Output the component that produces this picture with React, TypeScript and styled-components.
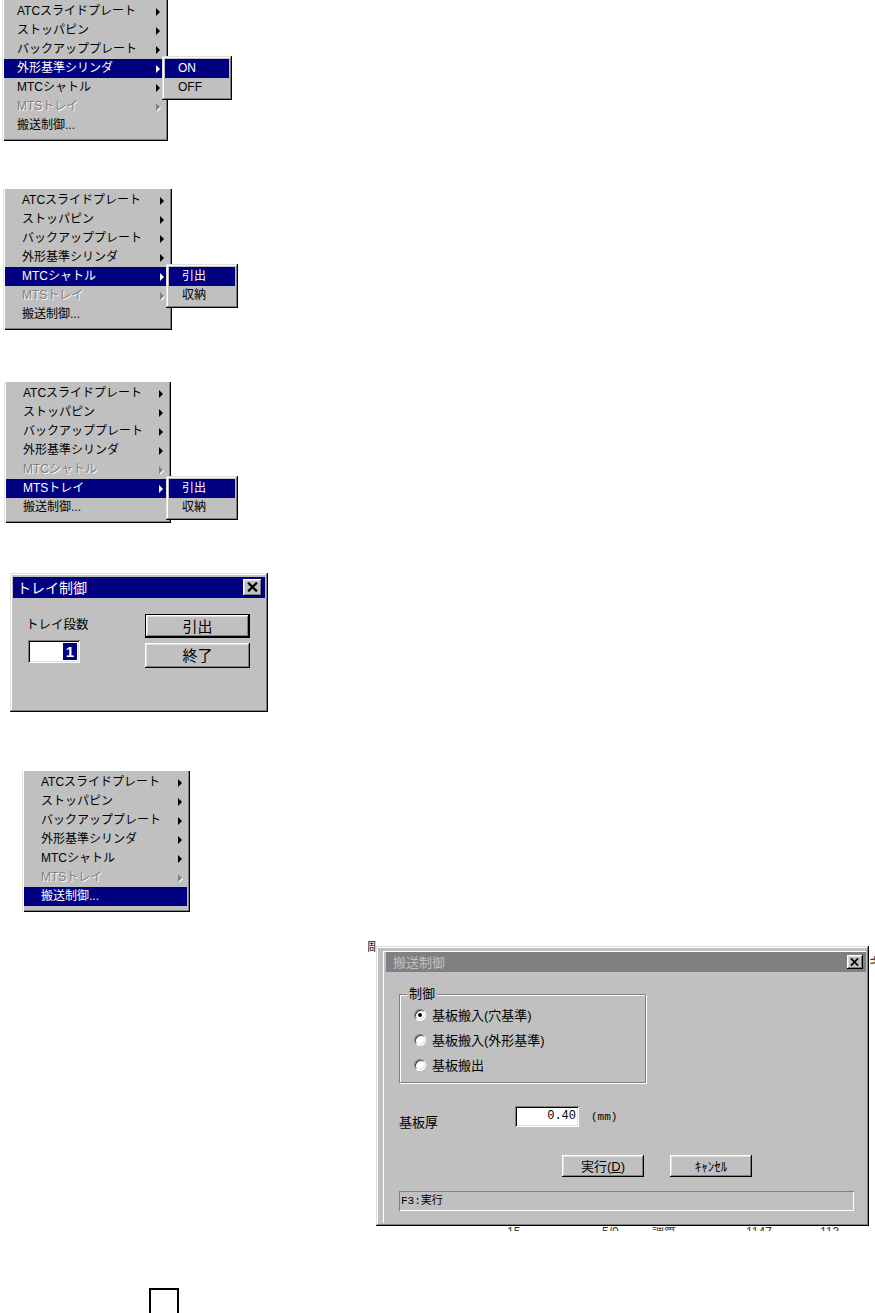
import React from "react";
import styled, { createGlobalStyle, css } from "styled-components";

const GlobalStyle = createGlobalStyle`
  html, body {
    margin: 0;
    padding: 0;
    background: #fff;
  }
  body {
    font-family: "Liberation Sans", "Noto Sans CJK JP", sans-serif;
    color: #000;
  }
`;

const raised = css`
  box-shadow: inset -1px -1px #000, inset 1px 1px #fff, inset -2px -2px #808080,
    inset 2px 2px #dfdfdf;
`;

const windowFrame = css`
  box-shadow: inset -1px -1px #000, inset 1px 1px #dfdfdf, inset -2px -2px #808080,
    inset 2px 2px #fff;
`;

const sunken = css`
  box-shadow: inset 1px 1px #808080, inset -1px -1px #fff, inset 2px 2px #000,
    inset -2px -2px #dfdfdf;
`;

const mono = `"Liberation Mono", "Noto Sans CJK JP", monospace`;

const Page = styled.div`
  width: 875px;
  height: 1313px;
  overflow: hidden;
  display: flex;
  flex-direction: column;
  align-items: flex-start;
`;

const Block = styled.div<{ $top: number; $left: number }>`
  position: relative;
  flex-shrink: 0;
  margin-top: ${(p) => p.$top}px;
  margin-left: ${(p) => p.$left}px;
`;

/* ---------- menus ---------- */

const Menu = styled.div<{ $width: number }>`
  width: ${(p) => p.$width}px;
  box-sizing: border-box;
  background: #c0c0c0;
  padding: 2px 3px 6px 2px;
  box-shadow: inset 1px 0 #dfdfdf, inset 2px 0 #fff, inset -1px -1px #000,
    inset -2px -2px #808080;
  font-size: 12px;
`;

const SubMenu = styled.div<{ $x: number; $y: number; $width: number }>`
  position: absolute;
  left: ${(p) => p.$x}px;
  top: ${(p) => p.$y}px;
  width: ${(p) => p.$width}px;
  box-sizing: border-box;
  background: #c0c0c0;
  padding: 3px;
  ${windowFrame};
  font-size: 12px;
`;

const Item = styled.div<{ $active?: boolean; $disabled?: boolean; $indent: number }>`
  height: 19px;
  display: flex;
  align-items: center;
  justify-content: space-between;
  padding: 0 5px 0 ${(p) => p.$indent}px;
  line-height: 19px;
  white-space: nowrap;
  background: ${(p) => (p.$active ? "#000080" : "transparent")};
  color: ${(p) => (p.$active ? "#fff" : p.$disabled ? "#808080" : "#000")};
  text-shadow: ${(p) => (p.$disabled && !p.$active ? "1px 1px 0 #fff" : "none")};
`;

const Arrow = styled.span<{ $disabled?: boolean }>`
  width: 0;
  height: 0;
  border-top: 4px solid transparent;
  border-bottom: 4px solid transparent;
  border-left: 4px solid currentColor;
  filter: ${(p) => (p.$disabled ? "drop-shadow(1px 1px 0 #fff)" : "none")};
`;

/* ---------- windows ---------- */

const Window = styled.div<{ $width: number; $height: number; $pad: string }>`
  width: ${(p) => p.$width}px;
  height: ${(p) => p.$height}px;
  box-sizing: border-box;
  flex-shrink: 0;
  background: #c0c0c0;
  padding: ${(p) => p.$pad};
  ${windowFrame};
  display: flex;
  flex-direction: column;
`;

const InnerFrame = styled.div`
  flex: 1;
  display: flex;
  flex-direction: column;
  border-top: 1px solid #fff;
  border-left: 1px solid #fff;
  padding-left: 2px;
`;

const TitleBar = styled.div<{ $inactive?: boolean; $height: number; $indent: number }>`
  height: ${(p) => p.$height}px;
  display: flex;
  align-items: center;
  justify-content: space-between;
  padding: 0 3px 0 ${(p) => p.$indent}px;
  background: ${(p) => (p.$inactive ? "#808080" : "#000080")};
  color: ${(p) => (p.$inactive ? "#c0c0c0" : "#fff")};
`;

const TitleText = styled.span<{ $size: number }>`
  font-size: ${(p) => p.$size}px;
  line-height: 1;
  white-space: nowrap;
`;

const CloseButton = styled.div<{ $w: number; $h: number }>`
  width: ${(p) => p.$w}px;
  height: ${(p) => p.$h}px;
  box-sizing: border-box;
  background: #c0c0c0;
  ${raised};
  display: flex;
  align-items: center;
  justify-content: center;
  padding: 0 1px 1px 0;
`;

const PushButton = styled.div<{ $w: number; $h: number; $size: number; $default?: boolean }>`
  width: ${(p) => p.$w}px;
  height: ${(p) => p.$h}px;
  box-sizing: border-box;
  background: #c0c0c0;
  border: ${(p) => (p.$default ? "1px solid #000" : "none")};
  ${raised};
  display: flex;
  align-items: center;
  justify-content: center;
  font-size: ${(p) => p.$size}px;
  line-height: 1;
  white-space: nowrap;
`;

/* ---------- トレイ制御 dialog ---------- */

const TrayBody = styled.div`
  display: flex;
  padding: 16px 0 0 13px;
`;

const TrayLeft = styled.div`
  width: 119px;
  display: flex;
  flex-direction: column;
  align-items: flex-start;
  padding-top: 3px;
`;

const TrayLabel = styled.div`
  font-size: 12.5px;
  line-height: 16px;
`;

const TrayField = styled.div`
  width: 52px;
  height: 23px;
  box-sizing: border-box;
  margin: 7px 0 0 2px;
  background: #fff;
  ${sunken};
  display: flex;
  align-items: center;
  justify-content: flex-end;
  padding-right: 3px;
`;

const Selected = styled.span`
  background: #000080;
  color: #fff;
  font-size: 15px;
  font-weight: bold;
  line-height: 17px;
  padding: 0 3px;
`;

const TrayButtons = styled.div`
  display: flex;
  flex-direction: column;
  gap: 5px;
`;

/* ---------- 搬送制御 dialog ---------- */

const DialogRow = styled.div`
  display: flex;
  align-items: flex-start;
  margin: 28px 0 0 368px;
  flex-shrink: 0;
`;

const Peek = styled.div<{ $w: number; $h: number; $top: number; $end?: boolean }>`
  width: ${(p) => p.$w}px;
  height: ${(p) => p.$h}px;
  margin-top: ${(p) => p.$top}px;
  overflow: hidden;
  display: flex;
  justify-content: ${(p) => (p.$end ? "flex-end" : "flex-start")};
  font-size: 13px;
  line-height: 13px;
  color: #222;
  flex-shrink: 0;
`;

const DialogShift = styled.div`
  margin-top: 6px;
`;

const TransferBody = styled.div`
  display: flex;
  flex-direction: column;
  align-items: flex-start;
  padding-left: 13px;
  font-size: 13px;
`;

const Group = styled.div`
  position: relative;
  width: 247px;
  height: 89px;
  box-sizing: border-box;
  margin-top: 22px;
  border: 1px solid #808080;
  box-shadow: inset 1px 1px #fff, 1px 1px #fff;
  padding: 7px 0 0 14px;
`;

const GroupLabel = styled.span`
  position: absolute;
  top: -9px;
  left: 7px;
  padding: 0 2px;
  background: #c0c0c0;
  line-height: 16px;
`;

const RadioRow = styled.div`
  height: 25px;
  display: flex;
  align-items: center;
  gap: 6px;
  white-space: nowrap;
`;

const RadioDot = styled.span<{ $checked?: boolean }>`
  position: relative;
  width: 12px;
  height: 12px;
  box-sizing: border-box;
  border-radius: 50%;
  border: 1px solid;
  border-color: #808080 #fff #fff #808080;
  background: #fff;
  box-shadow: inset 1px 1px #404040, inset -1px -1px #dfdfdf;
  &::after {
    content: "";
    display: ${(p) => (p.$checked ? "block" : "none")};
    position: absolute;
    left: 3px;
    top: 3px;
    width: 4px;
    height: 4px;
    border-radius: 50%;
    background: #000;
  }
`;

const ThickRow = styled.div`
  display: flex;
  align-items: center;
  margin-top: 23px;
  height: 21px;
`;

const ThickLabel = styled.span`
  width: 116px;
  padding-top: 9px;
`;

const NumField = styled.div`
  width: 64px;
  height: 21px;
  box-sizing: border-box;
  background: #fff;
  ${sunken};
  font-family: ${mono};
  font-size: 12px;
  line-height: 20px;
  text-align: right;
  padding-right: 3px;
`;

const Unit = styled.span`
  margin-left: 12px;
  font-family: ${mono};
  font-size: 11px;
`;

const ActionRow = styled.div`
  display: flex;
  gap: 26px;
  margin: 28px 0 0 163px;
`;

const StatusBar = styled.div`
  width: 455px;
  height: 20px;
  box-sizing: border-box;
  margin-top: 14px;
  box-shadow: inset 1px 1px #808080, inset -1px -1px #fff;
  padding-left: 2px;
  font-family: ${mono};
  font-size: 11px;
  line-height: 20px;
`;

const Strip = styled.div`
  display: flex;
  height: 4px;
  overflow: hidden;
  margin: 1px 0 0 507px;
  font-size: 12px;
  line-height: 11px;
  color: #333;
  flex-shrink: 0;
`;

const StripCell = styled.span<{ $w: number }>`
  width: ${(p) => p.$w}px;
  flex-shrink: 0;
  white-space: nowrap;
`;

const Marker = styled.div`
  width: 30px;
  height: 30px;
  box-sizing: border-box;
  margin: 57px 0 0 149px;
  border: 2px solid #000;
  flex-shrink: 0;
`;

/* ---------- pieces ---------- */

const CloseGlyph = ({ size }: { size: number }) => (
  <svg width={size} height={size - 1} viewBox="0 0 10 9">
    <path d="M1 0.5 L9 8.5 M9 0.5 L1 8.5" stroke="#000" strokeWidth="2" />
  </svg>
);

const mainItems = [
  "ATCスライドプレート",
  "ストッパピン",
  "バックアッププレート",
  "外形基準シリンダ",
  "MTCシャトル",
  "MTSトレイ",
  "搬送制御...",
];

type MenuConfig = {
  top: number;
  left: number;
  width: number;
  indent: number;
  active: number;
  disabled: number;
  sub?: { x: number; width: number; items: string[] };
};

const menus: MenuConfig[] = [
  { top: 0, left: 2, width: 166, indent: 13, active: 3, disabled: 5, sub: { x: 160, width: 70, items: ["ON", "OFF"] } },
  { top: 48, left: 3, width: 169, indent: 17, active: 4, disabled: 5, sub: { x: 163, width: 72, items: ["引出", "収納"] } },
  { top: 52, left: 4, width: 167, indent: 17, active: 5, disabled: 4, sub: { x: 162, width: 72, items: ["引出", "収納"] } },
];

const lastMenu: MenuConfig = { top: 59, left: 22, width: 168, indent: 17, active: 6, disabled: 5 };

function PopupMenu({ cfg }: { cfg: MenuConfig }) {
  return (
    <Block $top={cfg.top} $left={cfg.left}>
      <Menu $width={cfg.width}>
        {mainItems.map((label, i) => (
          <Item key={label} $indent={cfg.indent} $active={i === cfg.active} $disabled={i === cfg.disabled}>
            <span>{label}</span>
            {i < 6 && <Arrow $disabled={i === cfg.disabled && i !== cfg.active} />}
          </Item>
        ))}
      </Menu>
      {cfg.sub && (
        <SubMenu $x={cfg.sub.x} $y={cfg.active * 19 - 1} $width={cfg.sub.width}>
          {cfg.sub.items.map((label, i) => (
            <Item key={label} $indent={13} $active={i === 0}>
              <span>{label}</span>
            </Item>
          ))}
        </SubMenu>
      )}
    </Block>
  );
}

function TrayDialog() {
  return (
    <Block $top={50} $left={10}>
      <Window $width={258} $height={139} $pad="4px 3px 3px 3px">
        <TitleBar $height={21} $indent={4}>
          <TitleText $size={14}>トレイ制御</TitleText>
          <CloseButton $w={19} $h={17}>
            <CloseGlyph size={11} />
          </CloseButton>
        </TitleBar>
        <TrayBody>
          <TrayLeft>
            <TrayLabel>トレイ段数</TrayLabel>
            <TrayField>
              <Selected>1</Selected>
            </TrayField>
          </TrayLeft>
          <TrayButtons>
            <PushButton $w={105} $h={24} $size={15} $default>
              引出
            </PushButton>
            <PushButton $w={105} $h={25} $size={15}>
              終了
            </PushButton>
          </TrayButtons>
        </TrayBody>
      </Window>
    </Block>
  );
}

const radios = ["基板搬入(穴基準)", "基板搬入(外形基準)", "基板搬出"];

function TransferDialog() {
  return (
    <>
      <DialogRow>
        <Peek $w={8} $h={12} $top={0} $end>
          調
        </Peek>
        <DialogShift>
          <Window $width={493} $height={280} $pad="5px 3px 3px 7px">
            <InnerFrame>
              <TitleBar $height={20} $indent={7} $inactive>
                <TitleText $size={13}>搬送制御</TitleText>
                <CloseButton $w={16} $h={14}>
                  <CloseGlyph size={9} />
                </CloseButton>
              </TitleBar>
              <TransferBody>
                <Group>
                  <GroupLabel>制御</GroupLabel>
                  {radios.map((label, i) => (
                    <RadioRow key={label}>
                      <RadioDot $checked={i === 0} />
                      <span>{label}</span>
                    </RadioRow>
                  ))}
                </Group>
                <ThickRow>
                  <ThickLabel>基板厚</ThickLabel>
                  <NumField>0.40</NumField>
                  <Unit>(mm)</Unit>
                </ThickRow>
                <ActionRow>
                  <PushButton $w={82} $h={22} $size={13}>
                    実行(<u>D</u>)
                  </PushButton>
                  <PushButton $w={82} $h={22} $size={13}>
                    ｷｬﾝｾﾙ
                  </PushButton>
                </ActionRow>
                <StatusBar>F3:実行</StatusBar>
              </TransferBody>
            </InnerFrame>
          </Window>
        </DialogShift>
        <Peek $w={6} $h={13} $top={15}>
          キ
        </Peek>
      </DialogRow>
      <Strip>
        <StripCell $w={95}>15</StripCell>
        <StripCell $w={46}>5/0</StripCell>
        <StripCell $w={98}>-調質</StripCell>
        <StripCell $w={74}>1147</StripCell>
        <StripCell $w={50}>113</StripCell>
      </Strip>
    </>
  );
}

export default function App() {
  return (
    <>
      <GlobalStyle />
      <Page>
        {menus.map((cfg, i) => (
          <PopupMenu key={i} cfg={cfg} />
        ))}
        <TrayDialog />
        <PopupMenu cfg={lastMenu} />
        <TransferDialog />
        <Marker />
      </Page>
    </>
  );
}
